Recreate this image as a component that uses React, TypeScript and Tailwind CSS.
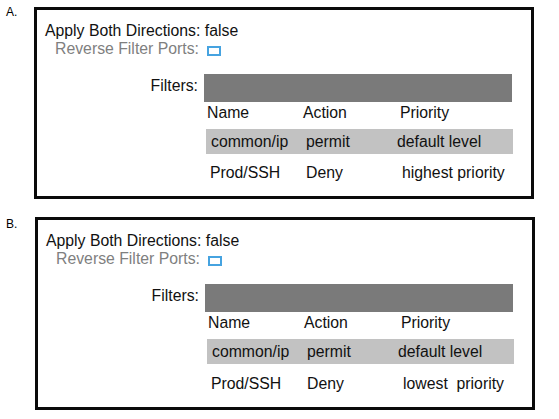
import React from "react";

type Row = [string, string, string];

function Section({
  label,
  rows,
  boxClass,
  labelClass,
  row3Mt,
}: {
  label: string;
  rows: Row[];
  boxClass: string;
  labelClass: string;
  row3Mt: string;
}) {
  return (
    <div className="flex items-start">
      <div className={`w-[34px] pl-[6px] text-[12px] leading-[14px] text-black ${labelClass}`}>{label}</div>
      <div className={`w-[500px] border-[3px] border-[#0a0a0a] bg-white pt-[12px] pb-[14px] ${boxClass}`}>
        <div className="pl-[8px] text-[15.8px] leading-[18px] text-[#111]">Apply Both Directions: false</div>
        <div className="flex items-center pl-[18px] text-[15.8px] leading-[18px] text-[#7f7f7f]">
          <span>Reverse Filter Ports:</span>
          <span className="ml-[8px] mt-[3px] inline-block h-[10px] w-[14px] border-2 border-[#46a3e0]" />
        </div>
        <div className="mt-[16px] flex items-start">
          <div className="w-[161px] pt-[3px] text-right text-[15.8px] leading-[18px] text-[#111]">Filters:</div>
          <div className="ml-[6px] flex w-[309px] flex-col">
            <div className="h-[28px] w-[308px] bg-[#7a7a7a]" />
            <div className="mt-[2px] flex pl-[3px] text-[15.8px] leading-[18px] text-[#111]">
              <span className="w-[96px]">Name</span>
              <span className="w-[97px]">Action</span>
              <span>Priority</span>
            </div>
            <div className="ml-[2px] mt-[7px] flex h-[25px] w-[307px] items-center bg-[#c2c2c2] pl-[5px] text-[15.8px] leading-[18px] text-[#111]">
              <span className="w-[95px]">{rows[0][0]}</span>
              <span className="w-[91px]">{rows[0][1]}</span>
              <span>{rows[0][2]}</span>
            </div>
            <div className={`flex pl-[6px] text-[15.8px] leading-[18px] text-[#111] ${row3Mt}`}>
              <span className="w-[96px]">{rows[1][0]}</span>
              <span className="w-[96px]">{rows[1][1]}</span>
              <span className="whitespace-pre">{rows[1][2]}</span>
            </div>
          </div>
        </div>
      </div>
    </div>
  );
}

export default function App() {
  return (
    <div
      className="h-[419px] w-[559px] overflow-hidden bg-white pt-[5px]"
      style={{ fontFamily: '"Liberation Sans", Arial, sans-serif' }}
    >
      <Section
        label="A."
        labelClass="pt-0"
        boxClass="mt-[2px]"
        row3Mt="mt-[10px]"
        rows={[
          ["common/ip", "permit", "default level"],
          ["Prod/SSH", "Deny", "highest priority"],
        ]}
      />
      <div className="mt-[18px]">
        <Section
          label="B."
          labelClass="pt-0"
          boxClass="ml-[1px]"
          row3Mt="mt-[11px]"
          rows={[
            ["common/ip", "permit", "default level"],
            ["Prod/SSH", "Deny", "lowest  priority"],
          ]}
        />
      </div>
    </div>
  );
}
